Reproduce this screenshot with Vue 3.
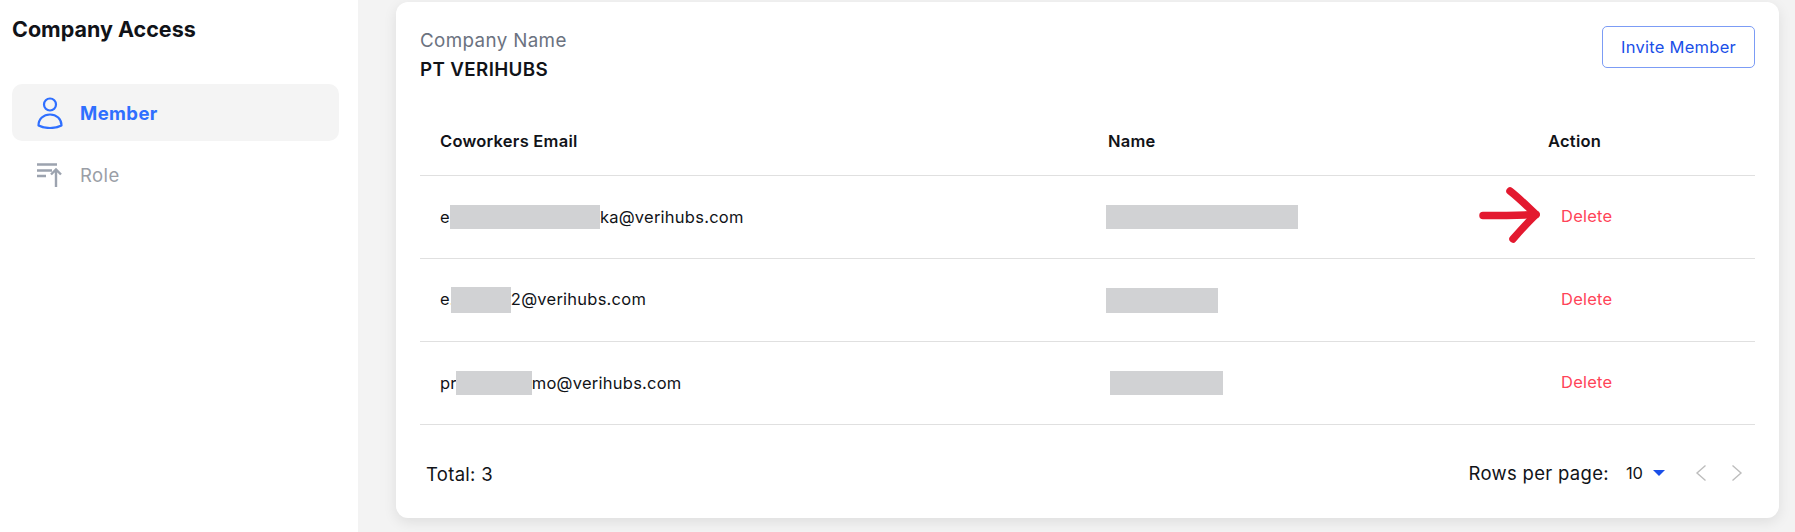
<script setup>
const members = [
  { prefix: 'e', mask: 150, maskH: 24, maskShift: 0, suffix: 'ka@verihubs.com', nameMask: 192, nameH: 24, nameOffset: 0 },
  { prefix: 'e.', mask: 60, maskH: 26, maskShift: -4, suffix: '2@verihubs.com', nameMask: 112, nameH: 25, nameOffset: 0 },
  { prefix: 'pr', mask: 76, maskH: 24, maskShift: -1, suffix: 'mo@verihubs.com', nameMask: 113, nameH: 24, nameOffset: 4 }
]
</script>

<template>
  <div class="page">
    <aside class="sidebar">
      <h2 class="side-title">Company Access</h2>
      <nav class="side-nav">
        <a class="side-item active">
          <svg class="side-icon" width="26" height="32" viewBox="0 0 26 32" fill="none" stroke="#2f6fff" stroke-width="2.2">
            <circle cx="13" cy="7.5" r="6" />
            <path d="M1.5 28.5C1.500 22 6.500 17.500 13 17.500S24.500 22 24.500 28.500C21 30.300 17 31 13 31S5 30.300 1.500 28.500Z" stroke-linejoin="round" />
          </svg>
          <span>Member</span>
        </a>
        <a class="side-item">
          <svg class="side-icon" width="26" height="24" viewBox="0 0 26 24" fill="none" stroke="#9ca3af" stroke-width="2.4">
            <path d="M0 1.500h20M0 7.500h15M0 13h9" />
            <path d="M19 24V7M14 11.500l5-5 5 5" />
          </svg>
          <span>Role</span>
        </a>
      </nav>
    </aside>

    <main class="content">
      <section class="card">
        <header class="card-head">
          <div>
            <div class="company-label">Company Name</div>
            <div class="company-name">PT VERIHUBS</div>
          </div>
          <button class="invite-btn">Invite Member</button>
        </header>

        <table class="member-table">
          <thead>
            <tr>
              <th class="col-email">Coworkers Email</th>
              <th class="col-name">Name</th>
              <th class="col-action">Action</th>
            </tr>
          </thead>
          <tbody>
            <tr v-for="m in members" :key="m.suffix">
              <td class="email-cell">
                {{ m.prefix }}<span class="mask email-mask" :style="{ width: m.mask + 'px', height: m.maskH + 'px', marginLeft: m.maskShift + 'px' }"></span>{{ m.suffix }}
              </td>
              <td>
                <span class="mask" :style="{ width: m.nameMask + 'px', height: m.nameH + 'px', marginLeft: m.nameOffset + 'px' }"></span>
              </td>
              <td class="action-cell"><a class="delete-link">Delete</a></td>
            </tr>
          </tbody>
        </table>

        <footer class="card-foot">
          <span class="total">Total: 3</span>
          <div class="pager">
            <span>Rows per page:</span>
            <span class="page-size">10<i class="caret"></i></span>
            <div class="pager-arrows">
              <svg width="12" height="18" viewBox="0 0 12 18" fill="none" stroke="#bdbdbd" stroke-width="1.400"><path d="M10.500 1.500 2 9l8.500 7.500" /></svg>
              <svg width="12" height="18" viewBox="0 0 12 18" fill="none" stroke="#bdbdbd" stroke-width="1.400"><path d="M1.500 1.500 10 9l-8.500 7.500" /></svg>
            </div>
          </div>
        </footer>

        <!-- annotation drawn over the screenshot -->
        <svg class="annotation" width="62" height="56" viewBox="0 0 62 56" fill="none" stroke="#e3192f" stroke-width="7.500" stroke-linecap="round" stroke-linejoin="round">
          <path d="M4 28.500C20 28.500 38 28.500 57 27.500" />
          <path d="M31 4C40 11 49 20 57 27.500C49 35 41 44 34 52" />
        </svg>
      </section>
    </main>
  </div>
</template>

<style>
html, body {
  margin: 0;
  background: #f3f3f3;
}
</style>

<style scoped>
.page {
  display: flex;
  height: 532px;
  overflow: hidden;
  font-family: Inter, "Liberation Sans", sans-serif;
  color: #111318;
  font-size: 16.5px;
  letter-spacing: 0.24px;
}

.sidebar {
  width: 358px;
  flex-shrink: 0;
  background: #fff;
  padding: 14px 19px 0 12px;
  box-sizing: border-box;
}

.side-title {
  margin: 0 0 40px;
  font-size: 21.5px;
  line-height: 30px;
  font-weight: 700;
  letter-spacing: 0;
}

.side-nav {
  display: flex;
  flex-direction: column;
  gap: 5px;
}

.side-item {
  display: flex;
  align-items: center;
  gap: 17px;
  height: 57px;
  padding-left: 25px;
  border-radius: 10px;
  font-size: 18.5px;
  letter-spacing: 0.4px;
  color: #9a9ea6;
}

.side-item.active {
  background: #f4f4f4;
  color: #2f6fff;
  font-weight: 700;
}

.side-icon {
  flex-shrink: 0;
}

.content {
  flex: 1;
  padding: 2px 16px 14px 38px;
  min-width: 0;
}

.card {
  position: relative;
  height: 100%;
  box-sizing: border-box;
  background: #fff;
  border-radius: 12px;
  padding: 24px 24px 0;
  box-shadow: 0 4px 14px rgba(0, 0, 0, 0.09);
}

.card-head {
  display: flex;
  justify-content: space-between;
  align-items: flex-start;
  height: 60px;
}

.company-label {
  font-size: 18.8px;
  line-height: 30px;
  letter-spacing: 0.36px;
  color: #6b7280;
}

.company-name {
  font-size: 18.8px;
  line-height: 28px;
  font-weight: 600;
  letter-spacing: 0.36px;
}

.invite-btn {
  width: 153px;
  height: 42px;
  background: #fff;
  border: 1px solid #7c9cf5;
  border-radius: 5px;
  color: #1a4fe8;
  font-family: inherit;
  font-size: 16.5px;
  letter-spacing: 0.26px;
  cursor: pointer;
}

.member-table {
  width: 100%;
  margin-top: 5px;
  border-collapse: collapse;
  table-layout: fixed;
}

.member-table th {
  height: 84px;
  box-sizing: border-box;
  padding: 16px 0 0;
  text-align: left;
  font-size: 16.5px;
  font-weight: 600;
  border-bottom: 1px solid #e0e0e0;
}

.member-table td {
  height: 83px;
  box-sizing: border-box;
  padding: 0;
  border-bottom: 1px solid #e0e0e0;
  line-height: 24px;
}

.col-email {
  width: 686px;
  padding-left: 20px !important;
}

.col-name {
  width: 442px;
}

.member-table th.col-name {
  padding-left: 2px;
}

.email-cell {
  padding-left: 20px !important;
  padding-top: 2px !important;
}

.mask {
  display: inline-block;
  vertical-align: middle;
  background: #d1d2d4;
}

.email-mask {
  transform: translateY(-1px);
}

.action-cell {
  padding-left: 13px !important;
  padding-bottom: 2px !important;
}

.delete-link {
  color: #ff4458;
  font-size: 16.5px;
  cursor: pointer;
}

.card-foot {
  display: flex;
  justify-content: space-between;
  align-items: center;
  height: 48px;
  margin-top: 24px;
  padding: 0 12px 0 6px;
  font-size: 18.5px;
  letter-spacing: 0.3px;
}

.total {
  padding-top: 2px;
}

.pager {
  display: flex;
  align-items: center;
}

.page-size {
  display: flex;
  align-items: center;
  gap: 10px;
  margin-left: 17px;
  font-size: 16.5px;
  letter-spacing: 0;
}

.caret {
  width: 0;
  height: 0;
  border-left: 6px solid transparent;
  border-right: 6px solid transparent;
  border-top: 6px solid #1a4fe8;
}

.pager-arrows {
  display: flex;
  gap: 24px;
  margin-left: 30px;
}

.annotation {
  position: absolute;
  left: 1083px;
  top: 185px;
}
</style>
